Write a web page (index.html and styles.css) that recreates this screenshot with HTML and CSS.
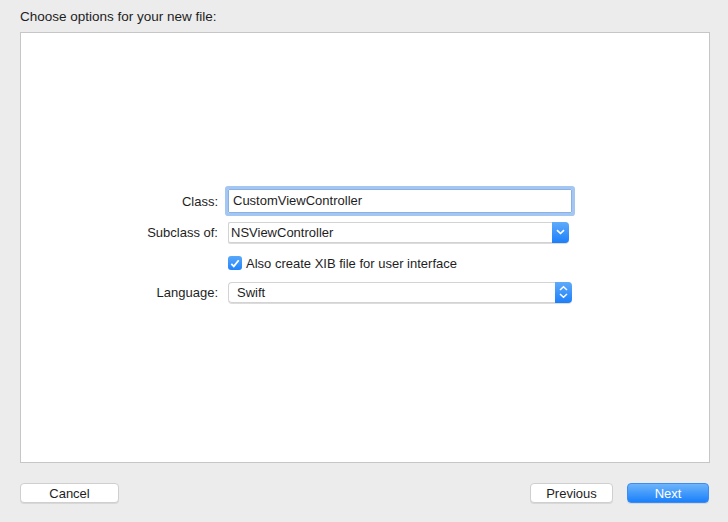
FILE: index.html
```html
<!DOCTYPE html>
<html lang="en">
<head>
  <meta charset="UTF-8" />
  <title>Choose options</title>
  <link rel="stylesheet" href="styles.css">
</head>
<body>
  <div class="title">Choose options for your new file:</div>
  <div class="panel">
    <div class="form">
      <label class="label">Class:</label>
      <div class="field focused">CustomViewController</div>

      <label class="label">Subclass of:</label>
      <div class="popup subclass">
        <span>NSViewController</span>
        <span class="arrow">
          <svg width="9" height="6" viewBox="0 0 9 6"><path d="M1 1.2 L4.5 4.5 L8 1.2" fill="none" stroke="#fff" stroke-width="1.6"/></svg>
        </span>
      </div>

      <span></span>
      <div class="check-row">
        <span class="checkbox">
          <svg width="10" height="9" viewBox="0 0 10 9"><path d="M1.3 4.8 L3.8 7.3 L8.7 1.3" fill="none" stroke="#fff" stroke-width="1.8"/></svg>
        </span>
        <span>Also create XIB file for user interface</span>
      </div>

      <label class="label">Language:</label>
      <div class="popup language">
        <span>Swift</span>
        <span class="arrow">
          <svg width="9" height="14" viewBox="0 0 9 14"><path d="M1 5 L4.5 1.8 L8 5 M1 9 L4.5 12.2 L8 9" fill="none" stroke="#fff" stroke-width="1.5"/></svg>
        </span>
      </div>
    </div>
  </div>
  <div class="footer">
    <button class="btn cancel">Cancel</button>
    <div class="right">
      <button class="btn prev">Previous</button>
      <button class="btn primary">Next</button>
    </div>
  </div>
</body>
</html>
```

FILE: styles.css
```css
body {
  margin: 0;
  background-color: #ececec;
  font-family: "Liberation Sans", Arial, sans-serif;
  font-size: 13px;
  color: #1e1e1e;
  width: 728px;
  height: 522px;
  overflow: hidden;
}
.title {
  height: 32px;
  box-sizing: border-box;
  padding: 7px 0 0 20px;
  line-height: 20px;
  font-size: 13.5px;
}
.panel {
  margin: 0 18px 0 20px;
  height: 431px;
  box-sizing: border-box;
  background: #fff;
  border: 1px solid #c6c6c6;
  padding-top: 152px;
}
.form {
  display: grid;
  grid-template-columns: 197px auto;
  grid-template-rows: 32px 30px 32px 26px;
  column-gap: 9px;
  align-items: center;
}
.label {
  text-align: right;
}
.field {
  width: 344px;
  height: 24px;
  box-sizing: border-box;
  border: 1px solid #b9b9b9;
  padding-left: 4px;
  line-height: 22px;
  border-radius: 1px;
  margin-left: 1px;
}
.focused {
  border-color: #8ab1e4;
  box-shadow: 0 0 0 3px #a3c6f2;
}
.popup {
  height: 21px;
  box-sizing: border-box;
  border: 1px solid #d3d3d3;
  border-right: none;
  border-radius: 4px;
  display: flex;
  justify-content: space-between;
  align-items: center;
  padding-left: 2px;
  box-shadow: 0 1px 0 #dcdcdc;
  margin-left: 1px;
}
.subclass {
  width: 341px;
  border-radius: 2px 4px 4px 2px;
}
.language {
  width: 344px;
  padding-left: 8px;
}
.arrow {
  width: 17px;
  height: 21px;
  margin-top: -1px;
  margin-bottom: -1px;
  border-radius: 0 4px 4px 0;
  background: linear-gradient(#5fabfa, #1c7ffb);
  display: flex;
  align-items: center;
  justify-content: center;
}
.check-row {
  display: flex;
  align-items: center;
  gap: 4px;
  margin-left: 1px;
  height: 16px;
}
.checkbox {
  width: 14px;
  height: 14px;
  border-radius: 3px;
  background: linear-gradient(#5aa8fa, #2183fb);
  display: flex;
  align-items: center;
  justify-content: center;
}
.footer {
  display: flex;
  justify-content: space-between;
  padding: 20px 19px 0 20px;
}
.right {
  display: flex;
  gap: 14px;
}
.btn {
  font-family: inherit;
  font-size: 13px;
  height: 20px;
  padding: 0;
  border: 1px solid #cfcfcf;
  border-radius: 4px;
  background: #fff;
  color: #1e1e1e;
  box-shadow: 0 1px 0 #d8d8d8;
}
.cancel {
  width: 99px;
}
.prev {
  width: 83px;
}
.primary {
  width: 82px;
  color: #fff;
  border: 1px solid #3b8df5;
  background: linear-gradient(#6db4fb, #1a80fb);
}
```
